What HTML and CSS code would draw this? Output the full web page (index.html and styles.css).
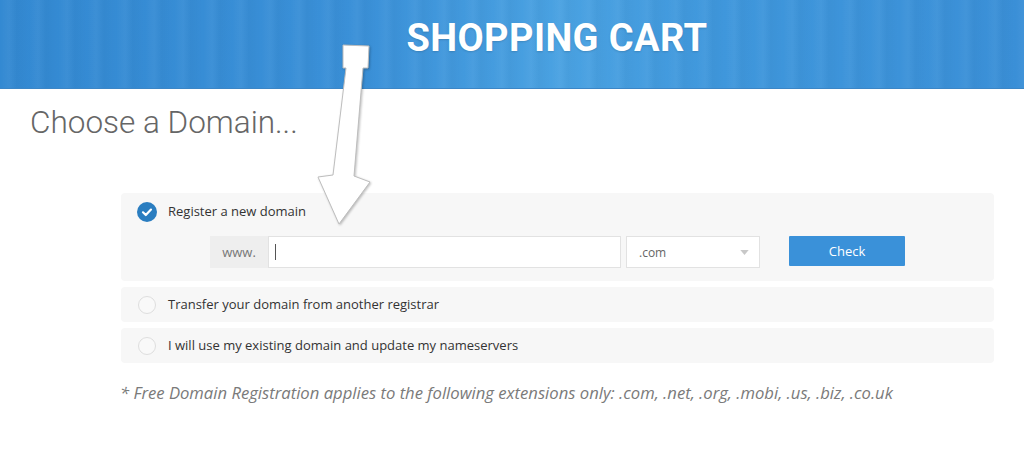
FILE: index.html
```html
<!DOCTYPE html>
<html>
<head>
<meta charset="utf-8">
<link rel="stylesheet" href="styles.css">
</head>
<body>
<header class="banner">
  <div class="banner-title">SHOPPING CART</div>
</header>
<main class="page">
  <h1 class="page-title">Choose a Domain...</h1>
  <section class="options">
    <div class="option option-open">
      <div class="option-row">
        <span class="radio radio-checked">
          <svg viewBox="0 0 20 20" width="20" height="20"><circle cx="10" cy="10" r="10" fill="#2a7dc0"/><path d="M6 10.3 L8.8 13 L14 7.6" fill="none" stroke="#fff" stroke-width="2.2" stroke-linecap="round" stroke-linejoin="round"/></svg>
        </span>
        <span class="option-label">Register a new domain</span>
      </div>
      <div class="domain-row">
        <div class="input-group">
          <span class="addon">www.</span>
          <span class="text-input"><span class="caret"></span></span>
        </div>
        <div class="select">
          <span>.com</span>
          <svg class="select-arrow" viewBox="0 0 10 6" width="9" height="5"><path d="M0 0 L10 0 L5 6 Z" fill="#c8c8c8"/></svg>
        </div>
        <button class="check-btn">Check</button>
      </div>
    </div>
    <div class="option">
      <div class="option-row">
        <span class="radio"></span>
        <span class="option-label">Transfer your domain from another registrar</span>
      </div>
    </div>
    <div class="option">
      <div class="option-row">
        <span class="radio"></span>
        <span class="option-label">I will use my existing domain and update my nameservers</span>
      </div>
    </div>
  </section>
  <p class="footnote">* Free Domain Registration applies to the following extensions only: .com, .net, .org, .mobi, .us, .biz, .co.uk</p>
</main>
<svg class="arrow" width="1024" height="465" viewBox="0 0 1024 465">
  <polygon points="343,45 369,46 368,68 363,68 354,176 370,182 339,224 318,177 333,175 346,68 343,68" fill="#fff" stroke="#bdbdbd" stroke-width="1"/>
</svg>
</body>
</html>
```

FILE: styles.css
```css
html, body {
  margin: 0;
  padding: 0;
  background: #fff;
  width: 1024px;
  height: 465px;
  overflow: hidden;
}
body {
  position: relative;
  font-family: "Open Sans", "Liberation Sans", sans-serif;
}
.banner {
  height: 89px;
  display: flex;
  align-items: center;
  justify-content: center;
  padding-left: 90px;
  box-sizing: border-box;
  background:
    repeating-linear-gradient(90deg, rgba(255,255,255,0.00) 0px, rgba(255,255,255,0.04) 9px, rgba(0,0,0,0.025) 17px, rgba(255,255,255,0.00) 29px),
    linear-gradient(90deg, #3389d2 0%, #3a90d8 35%, #4aa2e2 55%, #3f97dc 70%, #3a8fd7 100%);
  border-bottom: 1px solid #3c86c6;
}
.banner-title {
  color: #fff;
  font-family: Roboto, "Liberation Sans", sans-serif;
  font-weight: 700;
  font-size: 38px;
  letter-spacing: 0.4px;
  margin-bottom: 12px;
  text-shadow: 0 1px 2px rgba(0,0,0,0.15);
}
.page {
  padding: 0 0 0 30px;
}
.page-title {
  margin: 14px 0 0 0;
  font-family: Roboto, "Liberation Sans", sans-serif;
  font-weight: 300;
  font-size: 31.5px;
  color: #666;
  line-height: 40px;
}
.options {
  margin: 50px 0 0 91px;
  width: 873px;
  display: flex;
  flex-direction: column;
  gap: 6px;
}
.option {
  background: #f7f7f7;
  border-radius: 4px;
  padding: 8px 17px;
  height: 35px;
  box-sizing: border-box;
}
.option-open {
  height: 88px;
  padding-top: 9px;
}
.option-row {
  display: flex;
  align-items: center;
  gap: 12px;
  height: 19px;
}
.option-label {
  font-size: 13px;
  color: #333;
  margin-top: -2px;
}
.radio {
  width: 18px;
  height: 18px;
  border-radius: 50%;
  border: 1px solid #dedede;
  background: #f9f9f9;
  box-sizing: border-box;
  display: inline-block;
  flex: none;
}
.radio-checked {
  border: none;
  width: 20px;
  height: 20px;
  margin-left: -1px;
  margin-right: -1px;
  background: none;
}
.radio-checked svg { display: block; }
.domain-row {
  display: flex;
  align-items: flex-start;
  margin: 15px 0 0 72px;
}
.input-group {
  display: flex;
  height: 32px;
}
.addon {
  width: 58px;
  background: #eee;
  color: #777;
  font-size: 13px;
  display: flex;
  align-items: center;
  justify-content: center;
}
.text-input {
  width: 353px;
  background: #fff;
  border: 1px solid #e2e2e2;
  box-sizing: border-box;
  display: flex;
  align-items: center;
  padding-left: 6px;
}
.caret {
  width: 1px;
  height: 16px;
  background: #555;
}
.select {
  margin-left: 5px;
  width: 134px;
  height: 32px;
  background: #fff;
  border: 1px solid #e2e2e2;
  box-sizing: border-box;
  display: flex;
  align-items: center;
  justify-content: space-between;
  padding: 0 10px 0 12px;
  font-size: 12px;
  color: #666;
}
.check-btn {
  margin-left: 29px;
  width: 116px;
  height: 30px;
  background: #3a91d9;
  border: none;
  border-radius: 1px;
  color: #fff;
  font-family: "Open Sans", "Liberation Sans", sans-serif;
  font-size: 13px;
  padding: 0;
}
.footnote {
  margin: 18px 0 0 90px;
  font-style: italic;
  font-size: 16.65px;
  color: #7a7a7a;
}
.arrow {
  position: absolute;
  left: 0;
  top: 0;
  filter: drop-shadow(1px 1px 1px rgba(0,0,0,0.25));
  pointer-events: none;
}
```
